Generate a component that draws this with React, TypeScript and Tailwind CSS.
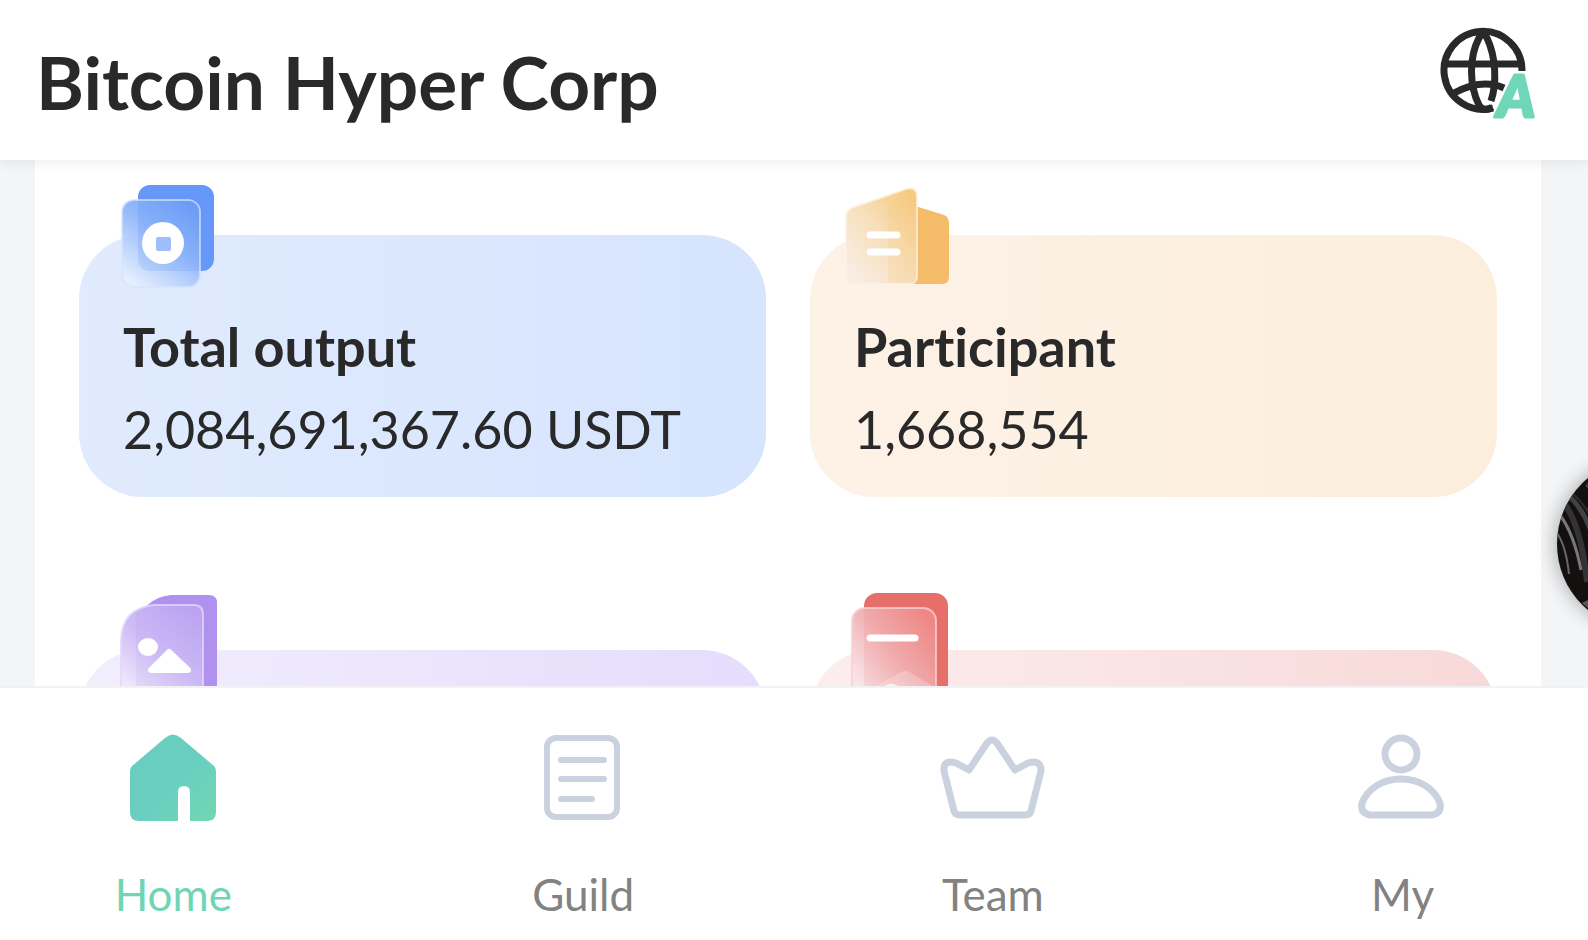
import React from 'react';

/** 统计卡片图标：蓝色硬币 */
const OutputIcon: React.FC = () => (
  <svg viewBox="0 0 120 120" className="h-full w-full" aria-hidden="true">
    <defs>
      <linearGradient id="coinGlass" x1="0.85" y1="0" x2="0.2" y2="1">
        <stop offset="0" stopColor="#6a9cf8" />
        <stop offset="0.45" stopColor="#92b7fa" stopOpacity="0.95" />
        <stop offset="1" stopColor="#e6effe" stopOpacity="0.9" />
      </linearGradient>
    </defs>
    <rect x="27" y="10" width="76" height="86" rx="12" fill="#6598f8" />
    <rect x="11" y="25" width="78" height="87" rx="12" fill="url(#coinGlass)" stroke="#d5e4fe" strokeOpacity="0.7" strokeWidth="2" />
    <path d="M27 26v58q1 11 11 12h50V26z" fill="#6598f8" opacity="0.12" />
    <circle cx="52" cy="68" r="21" fill="#fff" />
    <rect x="45" y="62" width="15" height="14" rx="2" fill="#9dbefa" />
  </svg>
);

/** 统计卡片图标：橙色楼宇 */
const ParticipantIcon: React.FC = () => (
  <svg viewBox="0 0 120 120" className="h-full w-full" aria-hidden="true">
    <defs>
      <linearGradient id="buildingGlass" x1="0.95" y1="0.1" x2="0.2" y2="0.95">
        <stop offset="0" stopColor="#f7ca82" />
        <stop offset="0.5" stopColor="#f6dfba" />
        <stop offset="1" stopColor="#f9ece0" />
      </linearGradient>
    </defs>
    <path d="M70 30l32 10q5 2 5 8v54q0 7-7 7H66z" fill="#f4bc69" />
    <path d="M12 32L64 14q11-3 11 8v79q0 8-8 8H12q-8 0-8-8V42q0-7 8-10z" fill="url(#buildingGlass)" stroke="#fdf1e3" strokeOpacity="0.75" strokeWidth="2" />
    <path d="M46 32q1-7 7-8l21-2v86H46z" fill="#f8bf62" opacity="0.14" />
    <path d="M28 60h27M28 77h27" stroke="#fff" strokeWidth="7" strokeLinecap="round" />
  </svg>
);

/** 统计卡片图标：紫色图片 */
const PictureIcon: React.FC = () => (
  <svg viewBox="0 0 120 120" className="h-full w-full" aria-hidden="true">
    <defs>
      <linearGradient id="pictureGlass" x1="0.85" y1="0" x2="0.2" y2="1">
        <stop offset="0" stopColor="#bda5f2" />
        <stop offset="0.5" stopColor="#cfbdf6" />
        <stop offset="1" stopColor="#f3edfd" />
      </linearGradient>
    </defs>
    <path d="M60 5h38q8 0 8 8v100H25V40Q30 8 60 5z" fill="#b092ee" />
    <path d="M43 15h40q9 0 9 10v88H10V50Q11 18 43 15z" fill="url(#pictureGlass)" stroke="#e2d6fb" strokeOpacity="0.8" strokeWidth="2" />
    <path d="M25 24q8-8 20-8h38q8 0 8 9v88H25z" fill="#b092ee" opacity="0.12" />
    <ellipse cx="37" cy="57" rx="10" ry="9" fill="#fff" />
    <path d="M58 62L40 80h37z" fill="#fff" stroke="#fff" strokeWidth="6" strokeLinejoin="round" />
  </svg>
);

/** 统计卡片图标：红色文档 */
const DocumentIcon: React.FC = () => (
  <svg viewBox="0 0 120 120" className="h-full w-full" aria-hidden="true">
    <defs>
      <linearGradient id="documentGlass" x1="0.9" y1="0.1" x2="0.1" y2="0.8">
        <stop offset="0" stopColor="#f08b89" />
        <stop offset="0.5" stopColor="#f1b0b2" />
        <stop offset="1" stopColor="#f9e4e8" />
      </linearGradient>
    </defs>
    <rect x="22" y="3" width="84" height="110" rx="13" fill="#e76f6a" />
    <rect x="10" y="18" width="84" height="96" rx="13" fill="url(#documentGlass)" stroke="#f9cfcf" strokeOpacity="0.8" strokeWidth="2" />
    <path d="M22 19h59q12 0 12 12v82H22z" fill="#e76f6a" opacity="0.1" />
    <path d="M28 48h45" stroke="#fff" strokeWidth="7" strokeLinecap="round" />
    <path d="M33 97l26-15q4-2 8 0l26 15v10H33z" fill="#fff" opacity="0.22" />
    <path d="M40 98q10-9 18 0z" fill="#fff" opacity="0.7" />
  </svg>
);

/** 语言切换图标 */
const LanguageIcon: React.FC = () => (
  <svg viewBox="0 -3 104 112" className="h-28 w-26" aria-hidden="true">
    <g fill="none" stroke="#292929" strokeWidth="7">
      <path d="M82 42A39 39 0 1 0 53 79" />
      <path d="M52 78Q44 84 39 76C29 56 29 28 39 9Q43 2 47 9C56 28 57 54 51 72" />
      <path d="M5 35h76M14 64q28-15 50-5" />
    </g>
    <text
      x="57"
      y="88"
      fontSize="58"
      fontWeight="900"
      fontStyle="italic"
      fill="#6fd6b8"
      stroke="#6fd6b8"
      strokeWidth="3"
      strokeLinejoin="round"
      className="font-['Lato',sans-serif]"
    >
      A
    </text>
  </svg>
);

const HomeIcon: React.FC = () => (
  <svg viewBox="0 0 110 90" className="h-full w-full" aria-hidden="true">
    <defs>
      <linearGradient id="homeFill" x1="0" y1="0" x2="1" y2="1">
        <stop offset="0.5" stopColor="#69cec0" />
        <stop offset="1" stopColor="#72d7b2" />
      </linearGradient>
    </defs>
    <path d="M47 4q8-7 16 0l33 28q2 2 2 5v41q0 9-9 9H72V58q0-6-6-6t-6 6v29H21q-9 0-9-9V37q0-3 2-5z" fill="url(#homeFill)" />
  </svg>
);

const GuildIcon: React.FC = () => (
  <svg viewBox="0 0 110 90" className="h-full w-full" fill="none" stroke="#cad1df" strokeWidth="6" strokeLinecap="round" aria-hidden="true">
    <rect x="19" y="4" width="70" height="79" rx="9" />
    <path d="M33 26h43M33 45h43M33 65h31" />
  </svg>
);

const TeamIcon: React.FC = () => (
  <svg viewBox="0 0 110 90" className="h-full w-full" fill="none" stroke="#cad1df" strokeWidth="7" strokeLinejoin="round" aria-hidden="true">
    <path d="M31 36L49 9q5-6 10 0l18 27 13-7q13-4 13 8L93 77q-1 4-6 4H22q-5 0-6-4L6 37q-1-12 12-8z" />
  </svg>
);

const MyIcon: React.FC = () => (
  <svg viewBox="0 0 110 90" className="h-full w-full" fill="none" stroke="#cad1df" strokeWidth="7" aria-hidden="true">
    <circle cx="53" cy="20" r="16" />
    <path d="M22 81h62q10-2 8-12C86 54 71 45 53 45S20 54 14 69q-2 10 8 12z" />
  </svg>
);

interface StatCardProps {
  /** 标题 */
  title: string;
  /** 数值 */
  value?: string;
  /** 图标 */
  icon: React.ReactNode;
  /** 背景渐变 */
  className: string;
}

/**
 * 统计卡片
 */
const StatCard: React.FC<StatCardProps> = ({ title, value, icon, className }) => (
  <section className={`relative h-[262px] rounded-[64px] px-11 pt-20 ${className}`} aria-label={title}>
    <div className="absolute -top-15 left-8 h-30 w-30">{icon}</div>
    {value && (
      <>
        <h2 className="text-[54px] leading-16 font-bold whitespace-nowrap">{title}</h2>
        <p className="mt-4 text-[52px] leading-17 whitespace-nowrap">{value}</p>
      </>
    )}
  </section>
);

const stats: StatCardProps[] = [
  {
    title: 'Total output',
    value: '2,084,691,367.60 USDT',
    icon: <OutputIcon />,
    className: 'bg-linear-to-r from-[#e0ebfd] to-[#d6e4fd]',
  },
  {
    title: 'Participant',
    value: '1,668,554',
    icon: <ParticipantIcon />,
    className: 'bg-linear-to-r from-[#fdf2e7] to-[#fceedd]',
  },
  {
    title: 'Gallery',
    icon: <PictureIcon />,
    className: 'bg-linear-to-r from-[#f2eefd] to-[#e6dcfc]',
  },
  {
    title: 'Documents',
    icon: <DocumentIcon />,
    className: 'bg-linear-to-r from-[#fcedee] to-[#f8d9d9]',
  },
];

const tabs = [
  { label: 'Home', icon: <HomeIcon />, active: true },
  { label: 'Guild', icon: <GuildIcon />, active: false },
  { label: 'Team', icon: <TeamIcon />, active: false },
  { label: 'My', icon: <MyIcon />, active: false },
];

const App: React.FC = () => (
  <div className="flex h-screen flex-col overflow-hidden bg-[#f4f5f7] font-['Lato',sans-serif] text-[#292929] [font-variant-ligatures:none]">
    {/* 顶部栏 */}
    <header className="relative z-10 flex h-40 shrink-0 items-center justify-between bg-white pt-1 pr-11 pl-9 shadow-[0_2px_12px_rgba(0,0,0,0.08)]">
      <h1 className="text-[73px] leading-20 font-bold">Bitcoin Hyper Corp</h1>
      <button type="button" aria-label="Language">
        <LanguageIcon />
      </button>
    </header>

    {/* 统计区域 */}
    <main className="relative min-h-0 flex-1 overflow-hidden pr-[47px] pl-[35px]">
      <div className="grid grid-cols-2 gap-x-11 gap-y-[153px] bg-white px-11 pt-[75px]">
        {stats.map((stat) => (
          <StatCard key={stat.title} {...stat} />
        ))}
      </div>

      {/* 悬浮按钮 */}
      <button
        type="button"
        aria-label="Support"
        className="absolute top-[298px] -right-[141px] h-[172px] w-[172px] overflow-hidden rounded-full bg-[#151010] shadow-[0_0_20px_rgba(0,0,0,0.35)]"
      >
        <svg viewBox="0 0 172 172" className="h-full w-full" fill="none" aria-hidden="true">
          <path d="M6 44Q24 66 30 124" stroke="#333234" strokeWidth="6" />
          <path d="M3 57Q17 76 24 112" stroke="#77777a" strokeWidth="3" />
          <path d="M0 75Q9 88 12 116" stroke="#68686a" strokeWidth="2" />
          <path d="M12 38Q32 56 42 100" stroke="#414144" strokeWidth="5" />
          <path d="M16 36Q30 48 40 72" stroke="#2c2b2d" strokeWidth="2" />
          <path d="M28 28l10-12v20zM30 50l8-8v24z" fill="#3c3b3e" />
          <path d="M25 145l12-6v16z" fill="#58585a" />
        </svg>
      </button>
    </main>

    {/* 底部导航 */}
    <nav className="flex h-[254px] shrink-0 justify-between border-t-2 border-[#f1f2f4] bg-white pr-3">
      {tabs.map((tab) => (
        <a
          key={tab.label}
          href="#"
          aria-current={tab.active ? 'page' : undefined}
          className={`flex w-[22%] flex-col items-center pt-[46px] text-[44px] leading-14 ${
            tab.active ? 'text-[#6fd6b5]' : 'text-[#828282]'
          }`}
        >
          <span className="h-[90px] w-[110px]">{tab.icon}</span>
          <span className="mt-[42px]">{tab.label}</span>
        </a>
      ))}
    </nav>
  </div>
);

export default App;
